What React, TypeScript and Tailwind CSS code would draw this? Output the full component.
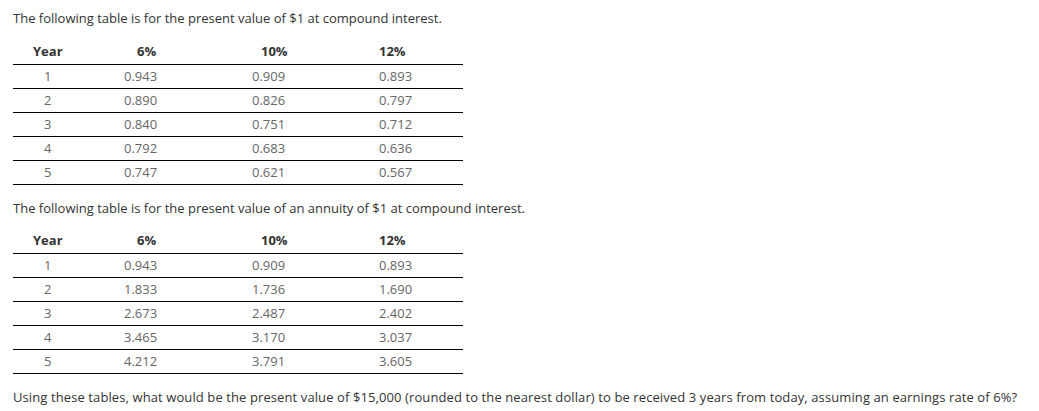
const pv = [
  ['1', '0.943', '0.909', '0.893'],
  ['2', '0.890', '0.826', '0.797'],
  ['3', '0.840', '0.751', '0.712'],
  ['4', '0.792', '0.683', '0.636'],
  ['5', '0.747', '0.621', '0.567'],
];

const annuity = [
  ['1', '0.943', '0.909', '0.893'],
  ['2', '1.833', '1.736', '1.690'],
  ['3', '2.673', '2.487', '2.402'],
  ['4', '3.465', '3.170', '3.037'],
  ['5', '4.212', '3.791', '3.605'],
];

function RateTable({ rows, className }: { rows: string[][]; className?: string }) {
  return (
    <div className={`w-[450px] ${className ?? ''}`}>
      {/* header */}
      <div className="grid grid-cols-[111px_128px_127px_84px] h-[25px] items-center border-b border-black font-bold text-[#333]">
        <div className="pl-[20px]">Year</div>
        <div className="pl-[13px]">6%</div>
        <div className="pl-[9px]">10%</div>
        <div>12%</div>
      </div>
      {rows.map(r => (
        <div
          key={r[0]}
          className="grid grid-cols-[111px_128px_127px_84px] h-[24px] items-center border-b border-black text-[#666]"
        >
          <div className="pl-[31px]">{r[0]}</div>
          <div>{r[1]}</div>
          <div>{r[2]}</div>
          <div>{r[3]}</div>
        </div>
      ))}
    </div>
  );
}

export default function App() {
  return (
    <div className="w-[1039px] h-[411px] bg-white pl-[13px] pt-[8px] text-[13px] text-[#333] font-['Open_Sans',sans-serif]">
      <p className="leading-[20px]">The following table is for the present value of $1 at compound interest.</p>
      <RateTable rows={pv} className="mt-[12px]" />
      <p className="leading-[20px] mt-[13px]">The following table is for the present value of an annuity of $1 at compound interest.</p>
      <RateTable rows={annuity} className="mt-[11px]" />
      <p className="leading-[20px] mt-[13px] tracking-[0.1px]">
        Using these tables, what would be the present value of $15,000 (rounded to the nearest dollar) to be received 3 years from today, assuming an earnings rate of 6%?
      </p>
    </div>
  );
}
